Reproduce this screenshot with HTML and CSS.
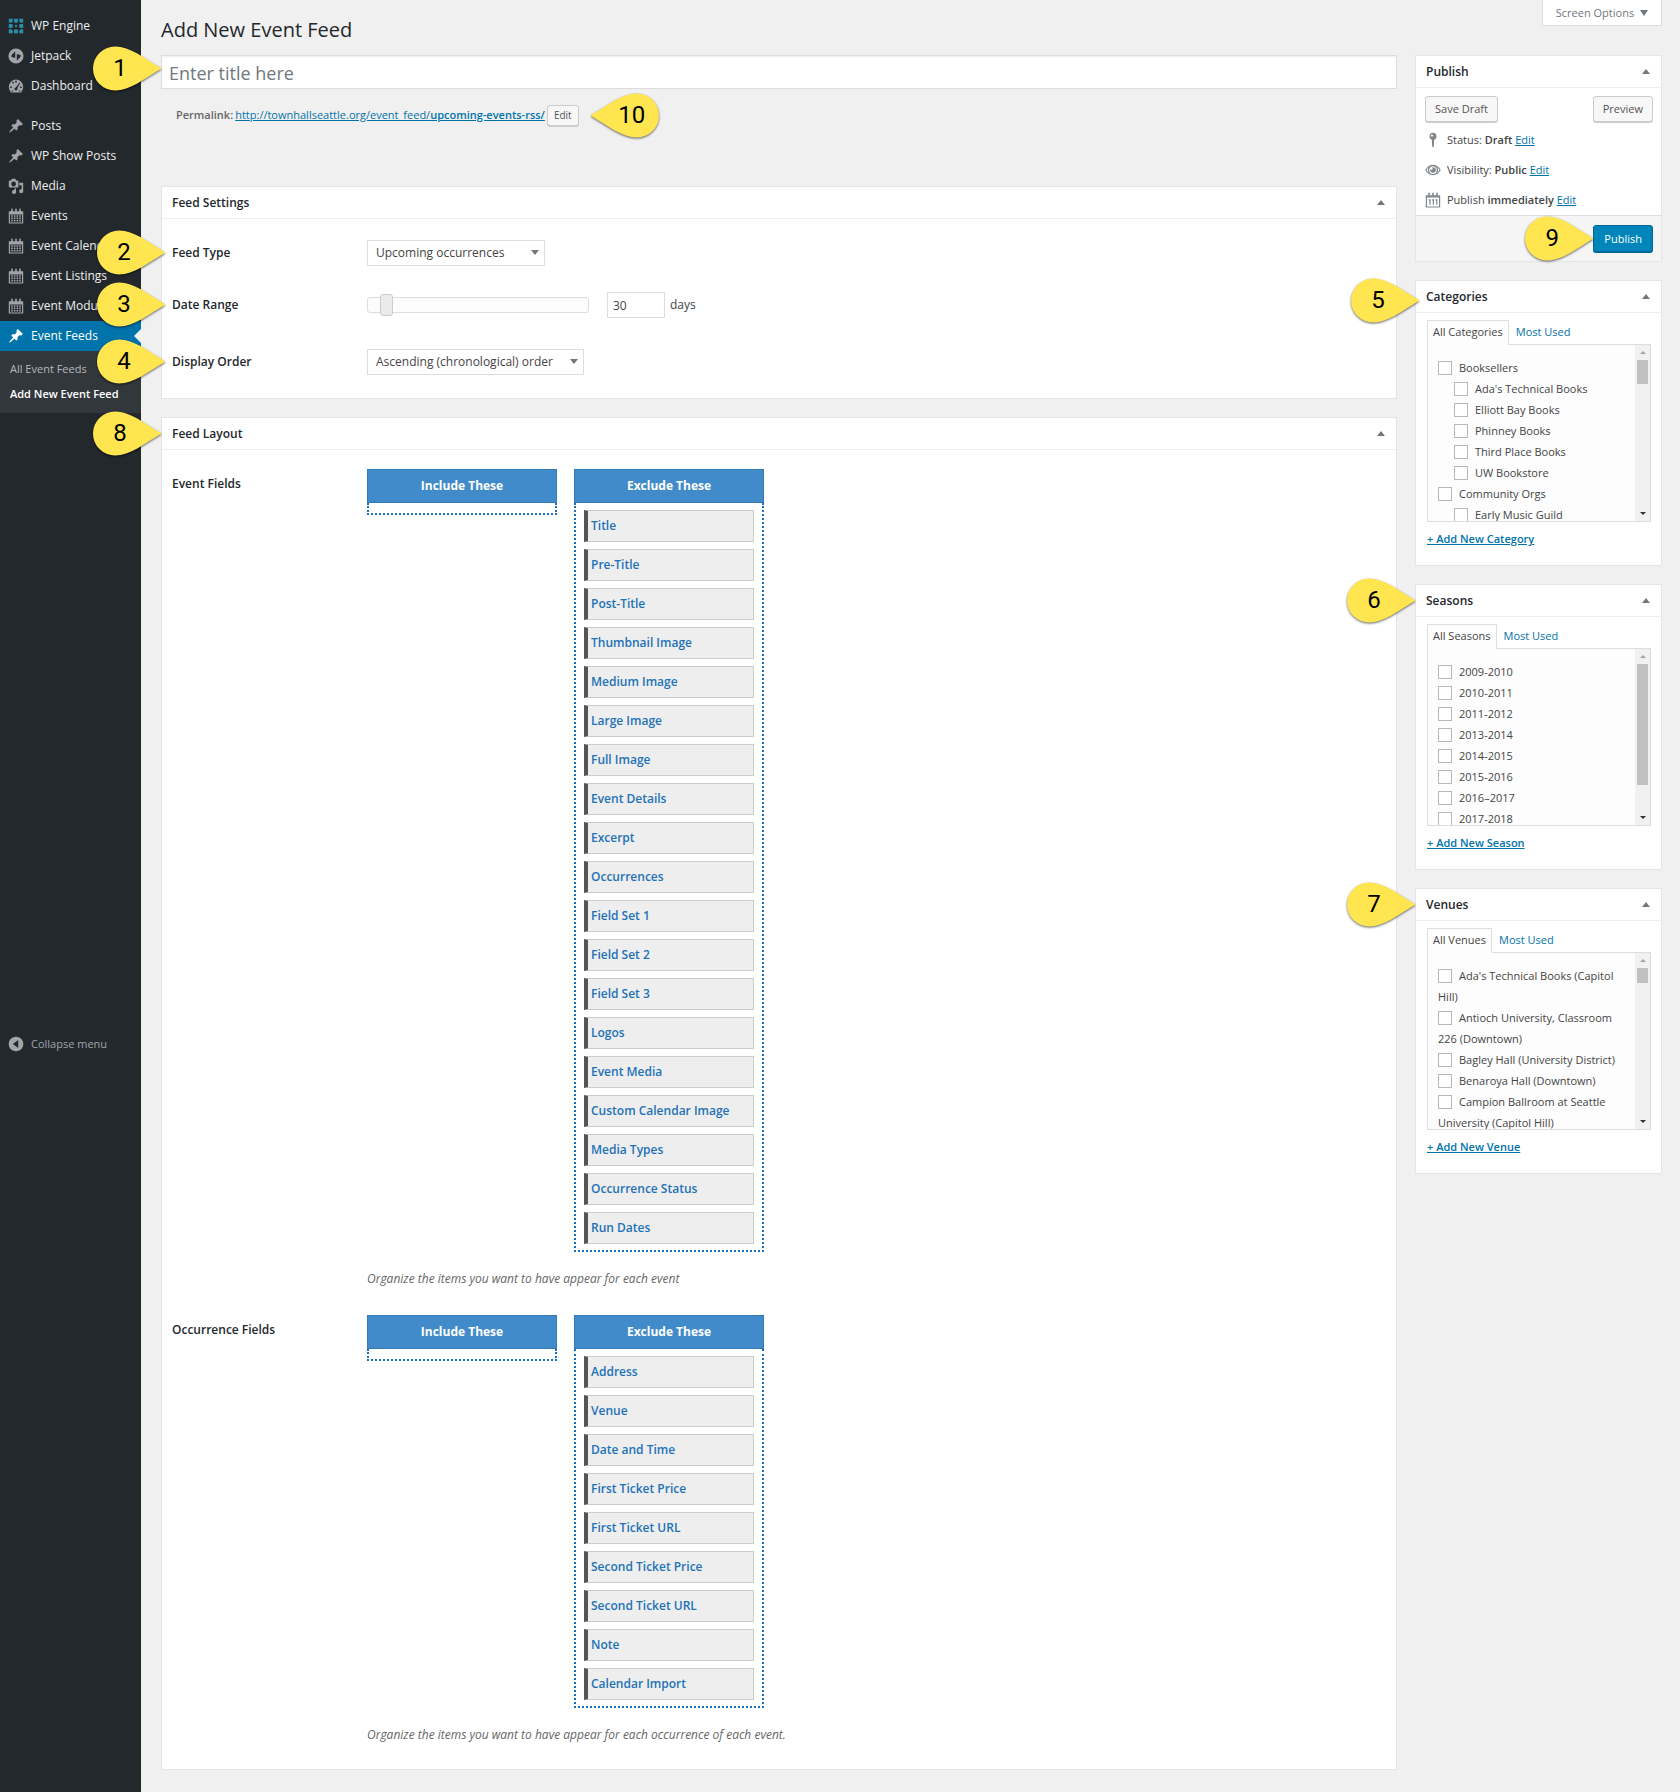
FILE: index.html
```html
<!DOCTYPE html>
<html lang="en">
<head>
<meta charset="utf-8">
<meta name="viewport" content="width=device-width, initial-scale=1">
<title>Add New Event Feed</title>
<link rel="stylesheet" href="styles.css">
</head>
<body>
<svg class="defs" aria-hidden="true">
  <symbol id="i-pin" viewBox="0 0 20 20"><path d="M10.44 3.02l1.82-1.82 6.36 6.35-1.83 1.82c-1.05-.68-2.48-.57-3.41.36l-.75.75c-.92.93-1.04 2.35-.35 3.41l-1.83 1.82-2.41-2.41-2.8 2.79c-.42.42-3.38 2.71-3.8 2.29s1.86-3.39 2.28-3.81l2.79-2.79L4.1 9.36l1.83-1.82c1.05.69 2.48.57 3.4-.36l.75-.75c.93-.92 1.05-2.35.36-3.41z"/></symbol>
  <symbol id="i-cal" viewBox="0 0 20 20"><path fill-rule="evenodd" d="M1 4h3V1.500c0-.8.500-1 1-1s1 .2 1 1V4h3V1.500c0-.8.500-1 1-1s1 .2 1 1V4h3V1.500c0-.8.500-1 1-1s1 .2 1 1V4h3v15.500H1zM2.500 8v10h15V8zM4 9h2v2H4zm3.300 0h2v2h-2zm3.400 0h2v2h-2zM14 9h2v2h-2zM4 12h2v2H4zm3.300 0h2v2h-2zm3.400 0h2v2h-2zM14 12h2v2h-2zM4 15h2v2H4zm3.300 0h2v2h-2zm3.400 0h2v2h-2zM14 15h2v2h-2z"/></symbol>
  <symbol id="i-drop" viewBox="0 0 70 45"><path d="M69.500 22.500C52 12 38 .5 23 .5a22 22 0 0 0 0 44c15 0 29-11.500 46.500-22z"/></symbol>
</svg>
<div class="layout">
  <nav class="sidebar" aria-label="Admin menu">
    <ul class="menu">
      <li><a href="#"><svg class="icon teal" viewBox="0 0 20 20"><path d="M1 1h5v3L4 6H1zM7.500 1h5v3.500l-1 1.500h-3l-1-1.500zM14 1h5v5h-3l-2-2zM1 7.500h3.500l1.500 1v3l-1.500 1H1zM8.800 8.800h2.400v2.400H8.800zM19 7.500h-3.500l-1.500 1v3l1.500 1H19zM1 14h3l2 2v3H1zM7.500 19v-3.500l1-1.500h3l1 1.500V19zM14 16l2-2h3v5h-5z"/></svg>WP Engine</a></li>
      <li><a href="#"><svg class="icon" viewBox="0 0 20 20"><path fill-rule="evenodd" d="M10 .5a9.500 9.500 0 1 0 0 19 9.500 9.500 0 0 0 0-19zM9 4v8.500l-4-1.200c-1-.3-1.200-1-.8-1.800zM11 16V7.500l4 1.200c1 .3 1.200 1 .8 1.800z"/></svg>Jetpack</a></li>
      <li><a href="#"><svg class="icon" viewBox="0 0 20 20"><path fill-rule="evenodd" d="M10 2a9 9 0 0 0-9 9c0 2.700 1 5 2.700 7h12.600C18 16 19 13.700 19 11a9 9 0 0 0-9-9zM9 3.500h2v2H9zM5 5.500l1.500-1 1.200 1.500-1.400 1.300zM2.800 10.500h2v2h-2zM15.200 10.500h2v2h-2zM14.500 5.500l.8.8-3.600 6.400c.5 1.300-.3 2.800-1.700 2.800s-2.400-1.600-1.600-2.800c.3-.6.800-.9 1.400-.9zM4.500 15.500h2V17h-2zM13.500 15.500h2V17h-2z"/></svg>Dashboard</a></li>
      <li class="group"><a href="#"><svg class="icon"><use href="#i-pin"/></svg>Posts</a></li>
      <li><a href="#"><svg class="icon"><use href="#i-pin"/></svg>WP Show Posts</a></li>
      <li><a href="#"><svg class="icon" viewBox="0 0 20 20"><path fill-rule="evenodd" d="M13 11V4c0-.55-.45-1-1-1h-1.670L9 1H5L3.670 3H2c-.55 0-1 .45-1 1v7c0 .55.45 1 1 1h10c.55 0 1-.45 1-1zM7 4.500a3 3 0 1 1 0 6 3 3 0 0 1 0-6zM14 6h5v10.500c0 1.400-1.100 2.500-2.500 2.500a2.500 2.500 0 1 1 .5-4.950V9h-3zM10 13v4.500c0 1.400-1.100 2.500-2.500 2.500a2.500 2.500 0 1 1 .5-4.950V13z"/></svg>Media</a></li>
      <li><a href="#"><svg class="icon"><use href="#i-cal"/></svg>Events</a></li>
      <li><a href="#"><svg class="icon"><use href="#i-cal"/></svg>Event Calendar</a></li>
      <li><a href="#"><svg class="icon"><use href="#i-cal"/></svg>Event Listings</a></li>
      <li><a href="#"><svg class="icon"><use href="#i-cal"/></svg>Event Modules</a></li>
      <li class="current"><a href="#" aria-current="true"><svg class="icon"><use href="#i-pin"/></svg>Event Feeds</a>
        <ul class="submenu">
          <li><a href="#">All Event Feeds</a></li>
          <li><a href="#" class="active">Add New Event Feed</a></li>
        </ul>
      </li>
    </ul>
    <button type="button" class="collapse"><svg class="icon" viewBox="0 0 20 20"><path fill-rule="evenodd" d="M10 .8a9.200 9.200 0 1 0 0 18.400A9.200 9.200 0 0 0 10 .8zM12.800 5v10L6 10z"/></svg>Collapse menu</button>
  </nav>

  <main class="content">
    <header class="top">
      <h1>Add New Event Feed</h1>
      <button type="button" class="screen-options">Screen Options <span class="tri down"></span></button>
    </header>

    <div class="columns">
      <div class="primary">
        <div class="anchor">
          <input class="title-input" type="text" placeholder="Enter title here" aria-label="Enter title here">
          <span class="callout at-edge high"><svg><use href="#i-drop"/></svg><b>1</b></span>
        </div>
        <div class="permalink">
          <strong>Permalink:</strong>
          <a href="#">http://townhallseattle.org/event_feed/<b>upcoming-events-rss/</b></a>
          <span class="anchor"><button type="button" class="button tiny">Edit</button><span class="callout left"><svg><use href="#i-drop"/></svg><b>10</b></span></span>
        </div>

        <section class="panel">
          <header class="panel-head"><h2>Feed Settings</h2><span class="tri up"></span></header>
          <div class="settings">
            <div class="row">
              <label class="anchor" for="type">Feed Type<span class="callout"><svg><use href="#i-drop"/></svg><b>2</b></span></label>
              <span class="select short"><select id="type"><option>Upcoming occurrences</option></select></span>
            </div>
            <div class="row range-row">
              <label class="anchor" for="days">Date Range<span class="callout"><svg><use href="#i-drop"/></svg><b>3</b></span></label>
              <div class="range">
                <input type="range" min="0" max="500" value="30" aria-label="Date range slider">
                <input id="days" class="days" type="text" value="30"><span>days</span>
              </div>
            </div>
            <div class="row">
              <label class="anchor" for="order">Display Order<span class="callout"><svg><use href="#i-drop"/></svg><b>4</b></span></label>
              <span class="select long"><select id="order"><option>Ascending (chronological) order</option></select></span>
            </div>
          </div>
        </section>

        <section class="panel">
          <header class="panel-head"><h2 class="anchor">Feed Layout<span class="callout far"><svg><use href="#i-drop"/></svg><b>8</b></span></h2><span class="tri up"></span></header>
          <div class="fields">
            <h3>Event Fields</h3>
            <div>
              <div class="lists">
                <div class="list"><h4>Include These</h4><ul></ul></div>
                <div class="list"><h4>Exclude These</h4>
                  <ul>
                    <li>Title</li><li>Pre-Title</li><li>Post-Title</li><li>Thumbnail Image</li><li>Medium Image</li><li>Large Image</li><li>Full Image</li><li>Event Details</li><li>Excerpt</li><li>Occurrences</li><li>Field Set 1</li><li>Field Set 2</li><li>Field Set 3</li><li>Logos</li><li>Event Media</li><li>Custom Calendar Image</li><li>Media Types</li><li>Occurrence Status</li><li>Run Dates</li>
                  </ul>
                </div>
              </div>
              <p class="hint">Organize the items you want to have appear for each event</p>
            </div>
            <h3>Occurrence Fields</h3>
            <div>
              <div class="lists">
                <div class="list"><h4>Include These</h4><ul></ul></div>
                <div class="list"><h4>Exclude These</h4>
                  <ul>
                    <li>Address</li><li>Venue</li><li>Date and Time</li><li>First Ticket Price</li><li>First Ticket URL</li><li>Second Ticket Price</li><li>Second Ticket URL</li><li>Note</li><li>Calendar Import</li>
                  </ul>
                </div>
              </div>
              <p class="hint">Organize the items you want to have appear for each occurrence of each event.</p>
            </div>
          </div>
        </section>
      </div>

      <aside class="secondary">
        <section class="panel">
          <header class="panel-head"><h2>Publish</h2><span class="tri up"></span></header>
          <div class="publish">
            <div class="publish-top"><button type="button" class="button">Save Draft</button><button type="button" class="button">Preview</button></div>
            <p><svg class="icon" viewBox="0 0 20 20"><path fill-rule="evenodd" d="M10 1a4.500 4.500 0 0 1 1.500 8.700l-.5 8.300-1 1.500L9 18l-.5-8.300A4.500 4.500 0 0 1 10 1zM8.700 3a1.400 1.400 0 1 0 0 2.800 1.400 1.400 0 0 0 0-2.800z"/></svg><span>Status: <b>Draft</b> <a href="#">Edit</a></span></p>
            <p><svg class="icon" viewBox="0 0 20 20"><path fill-rule="evenodd" d="M10 3.500c4 0 7.600 2.500 9.700 6.500-2.100 4-5.700 6.500-9.700 6.500S2.400 14 .3 10C2.400 6 6 3.500 10 3.500zm0 1.700a5 5 0 0 0-4 7.800 5 5 0 0 0 8 0 5 5 0 0 0-4-7.800zM5 6.200C3.700 7.200 2.700 8.500 2 10c.7 1.500 1.700 2.800 3 3.800a6.200 6.200 0 0 1 0-7.600zm10 0a6.200 6.200 0 0 1 0 7.600c1.300-1 2.300-2.300 3-3.800-.7-1.500-1.700-2.800-3-3.800zM10 6.500a3.500 3.500 0 1 1-3.500 3.500c0-.4.100-.8.200-1.200.3.600.9 1 1.600 1a1.700 1.700 0 0 0 .5-3.100c.4-.1.800-.2 1.200-.2z"/></svg><span>Visibility: <b>Public</b> <a href="#">Edit</a></span></p>
            <p><svg class="icon" viewBox="0 0 20 20"><path fill-rule="evenodd" d="M1 4h3V1.500c0-.8.500-1 1-1s1 .2 1 1V4h3V1.500c0-.8.500-1 1-1s1 .2 1 1V4h3V1.500c0-.8.500-1 1-1s1 .2 1 1V4h3v15.500H1zM2.500 7v11h15V7zM4.500 9H7v7H5.500v-5.500h-1zM8.700 9h2.500v7H9.700v-5.500h-1zM13 9h2.500v7H14v-5.500h-1z"/></svg><span>Publish <b>immediately</b> <a href="#">Edit</a></span></p>
          </div>
          <footer class="publish-foot"><span class="anchor"><button type="button" class="button primary-button">Publish</button><span class="callout at-edge"><svg><use href="#i-drop"/></svg><b>9</b></span></span></footer>
        </section>

        <section class="panel">
          <header class="panel-head"><h2 class="anchor">Categories<span class="callout low"><svg><use href="#i-drop"/></svg><b>5</b></span></h2><span class="tri up"></span></header>
          <div class="tax">
            <div class="tabs"><a href="#" class="tab on">All Categories</a><a href="#" class="tab">Most Used</a></div>
            <div class="scroller">
              <ul>
                <li><label><input type="checkbox">Booksellers</label>
                  <ul>
                    <li><label><input type="checkbox">Ada's Technical Books</label></li>
                    <li><label><input type="checkbox">Elliott Bay Books</label></li>
                    <li><label><input type="checkbox">Phinney Books</label></li>
                    <li><label><input type="checkbox">Third Place Books</label></li>
                    <li><label><input type="checkbox">UW Bookstore</label></li>
                  </ul></li>
                <li><label><input type="checkbox">Community Orgs</label>
                  <ul><li><label><input type="checkbox">Early Music Guild</label></li></ul></li>
              </ul>
              <div class="bar"><span class="arrow-up"></span><span class="thumb medium"></span><span class="arrow-down"></span></div>
            </div>
            <a href="#" class="add">+ Add New Category</a>
          </div>
        </section>

        <section class="panel">
          <header class="panel-head"><h2 class="anchor">Seasons<span class="callout far"><svg><use href="#i-drop"/></svg><b>6</b></span></h2><span class="tri up"></span></header>
          <div class="tax">
            <div class="tabs"><a href="#" class="tab on">All Seasons</a><a href="#" class="tab">Most Used</a></div>
            <div class="scroller">
              <ul>
                <li><label><input type="checkbox">2009-2010</label></li>
                <li><label><input type="checkbox">2010-2011</label></li>
                <li><label><input type="checkbox">2011-2012</label></li>
                <li><label><input type="checkbox">2013-2014</label></li>
                <li><label><input type="checkbox">2014-2015</label></li>
                <li><label><input type="checkbox">2015-2016</label></li>
                <li><label><input type="checkbox">2016–2017</label></li>
                <li><label><input type="checkbox">2017-2018</label></li>
              </ul>
              <div class="bar"><span class="arrow-up"></span><span class="thumb large"></span><span class="arrow-down"></span></div>
            </div>
            <a href="#" class="add">+ Add New Season</a>
          </div>
        </section>

        <section class="panel">
          <header class="panel-head"><h2 class="anchor">Venues<span class="callout far"><svg><use href="#i-drop"/></svg><b>7</b></span></h2><span class="tri up"></span></header>
          <div class="tax">
            <div class="tabs"><a href="#" class="tab on">All Venues</a><a href="#" class="tab">Most Used</a></div>
            <div class="scroller">
              <ul>
                <li><label><input type="checkbox">Ada's Technical Books (Capitol Hill)</label></li>
                <li><label><input type="checkbox">Antioch University, Classroom 226 (Downtown)</label></li>
                <li><label><input type="checkbox">Bagley Hall (University District)</label></li>
                <li><label><input type="checkbox">Benaroya Hall (Downtown)</label></li>
                <li><label><input type="checkbox">Campion Ballroom at Seattle University (Capitol Hill)</label></li>
              </ul>
              <div class="bar"><span class="arrow-up"></span><span class="thumb small"></span><span class="arrow-down"></span></div>
            </div>
            <a href="#" class="add">+ Add New Venue</a>
          </div>
        </section>
      </aside>
    </div>
  </main>
</div>
</body>
</html>
```
FILE: styles.css
```css
* { box-sizing: border-box; }
body {
  margin: 0;
  background: #f0f0f0;
  color: #444;
  font: 11px/20px "Open Sans", "Noto Sans", sans-serif;
}
h1, h2, h3, h4, p, ul { margin: 0; padding: 0; }
ul { list-style: none; }
a { color: #0073aa; }
button, input, select { font: inherit; color: inherit; margin: 0; }
b, strong { font-weight: 600; }
.defs { display: none; }
.icon { width: 16px; height: 16px; flex: none; fill: currentColor; }
.anchor { position: relative; }

.layout { display: flex; min-height: 100vh; }

/* Admin menu */
.sidebar {
  width: 141px;
  flex: none;
  padding-top: 11px;
  background: #23282d;
  font-size: 12px;
}
.menu > li > a, .collapse {
  display: flex;
  align-items: center;
  gap: 7px;
  height: 30px;
  padding: 0 8px;
  color: #eee;
  text-decoration: none;
  white-space: nowrap;
}
.menu .icon { color: #a0a5aa; }
.menu .teal { color: #2b8fa6; }
.menu .group { margin-top: 10px; }
.menu .current > a { position: relative; background: #0073aa; color: #fff; }
.menu .current .icon { color: #fff; }
.current > a::after {
  content: "";
  position: absolute;
  right: 0;
  top: 8px;
  border: 7px solid transparent;
  border-left: 0;
  border-right-color: #f0f0f0;
}
.submenu { padding: 5px 0 7px; background: #32373c; font-size: 11px; }
.submenu a {
  display: block;
  padding: 0 10px;
  line-height: 25px;
  color: #b4b9be;
  text-decoration: none;
  white-space: nowrap;
}
.submenu .active { color: #fff; font-weight: 600; }
.collapse {
  margin-top: 616px;
  border: 0;
  background: none;
  color: #a0a5aa;
  font-size: 11px;
}

/* Page frame */
.content { flex: 1; min-width: 0; padding: 0 18px 25px 20px; }
.top { display: flex; justify-content: space-between; align-items: flex-start; height: 55px; }
h1 { padding-top: 17px; font-size: 20px; line-height: 26px; font-weight: 400; color: #23282d; }
.screen-options {
  height: 26px;
  padding: 0 13px;
  border: 1px solid #ddd;
  border-top: 0;
  background: #fff;
  color: #72777c;
}
.tri { display: inline-block; border: 4px solid transparent; border-top-width: 0; border-bottom: 5px solid #72777c; }
.tri.down { margin: 0 0 1px 3px; border-top: 6px solid #72777c; border-bottom-width: 0; }
.columns { display: flex; gap: 18px; align-items: flex-start; }
.primary { flex: 1; min-width: 0; }
.secondary { width: 247px; flex: none; }

/* Title and permalink */
.title-input {
  display: block;
  width: 100%;
  height: 34px;
  padding: 2px 7px 0;
  border: 1px solid #ddd;
  background: #fff;
  font-size: 18px;
  box-shadow: inset 0 1px 2px rgba(0, 0, 0, .07);
}
.title-input::placeholder { color: #72777c; opacity: 1; }
.permalink {
  display: flex;
  align-items: center;
  gap: 2px;
  height: 22px;
  margin: 15px 0 60px;
  padding-left: 15px;
  color: #666;
}
.button {
  height: 26px;
  padding: 0 9px;
  border: 1px solid #ccc;
  border-radius: 3px;
  background: #f7f7f7;
  box-shadow: 0 1px 0 #ccc;
  color: #555;
}
.tiny { display: block; height: 21px; padding: 0 6px; font-size: 10px; line-height: 18px; }
.primary-button { display: block; height: 27px; padding: 0 10px; border-color: #006799; background: #0085ba; box-shadow: 0 1px 0 #006799; color: #fff; }

/* Panels */
.panel { margin-bottom: 18px; border: 1px solid #e5e5e5; background: #fff; }
.primary .panel:last-child, .secondary .panel:last-child { margin-bottom: 0; }
.panel-head {
  display: flex;
  justify-content: space-between;
  align-items: center;
  height: 32px;
  padding: 0 11px 0 10px;
  border-bottom: 1px solid #eee;
}
h2, h3, .row label { font-size: 12px; font-weight: 600; color: #23282d; }

/* Feed settings */
.settings { padding: 21px 10px 23px; }
.row { display: grid; grid-template-columns: 195px 1fr; align-items: center; min-height: 26px; }
.row + .row { margin-top: 26px; }
.row.range-row { margin-bottom: 31px; }
.row label { justify-self: start; }
.select { position: relative; display: block; }
.short { width: 178px; }
.long { width: 217px; }
.select::after {
  content: "";
  position: absolute;
  right: 6px;
  top: 10px;
  border: 4px solid transparent;
  border-top: 5px solid #72777c;
  border-bottom: 0;
}
select {
  display: block;
  appearance: none;
  width: 100%;
  height: 26px;
  padding: 0 8px;
  border: 1px solid #ddd;
  border-radius: 0;
  background: #fff;
  font-size: 12px;
}
.range { display: flex; align-items: center; font-size: 12px; }
.range input[type="range"] {
  appearance: none;
  width: 222px;
  height: 16px;
  margin-right: 18px;
  border: 1px solid #ddd;
  border-radius: 3px;
  background: #fcfcfc;
}
.range input::-webkit-slider-thumb {
  appearance: none;
  width: 13px;
  height: 22px;
  border: 1px solid #ccc;
  border-radius: 3px;
  background: #ebebeb;
}
.days { width: 58px; height: 26px; margin-right: 5px; padding: 0 5px; border: 1px solid #ddd; background: #fff; }

/* Field lists */
.fields { display: grid; grid-template-columns: 195px 1fr; padding: 19px 10px 24px; }
h3 { padding-top: 5px; }
.lists { display: flex; gap: 17px; align-items: flex-start; }
.list { width: 190px; text-align: center; }
.list h4 { background: #428bca; border: 1px solid #337ab7; color: #fff; font-size: 12px; line-height: 32px; font-weight: 700; }
.list ul {
  display: grid;
  gap: 7px;
  padding: 7px 8px 6px;
  border: 2px dotted #1b6fc0;
  border-top: 0;
}
.list ul:empty { padding: 5px; }
.list li {
  padding-left: 3px;
  border: 1px solid #ccc;
  border-left: 4px solid #555;
  background: #eee;
  color: #2272b8;
  font-size: 12px;
  line-height: 30px;
  font-weight: 600;
  text-align: left;
}
.hint { margin: 17px 0 26px; color: #666; font-size: 12px; font-style: italic; }
.fields > :last-child .hint { margin-bottom: 0; }

/* Publish box */
.publish { padding: 8px 8px 0 9px; }
.publish-top { display: flex; justify-content: space-between; margin-bottom: 3px; }
.publish p { display: flex; align-items: center; gap: 6px; height: 30px; }
.publish .icon { color: #82878c; }
.publish-foot { display: flex; justify-content: flex-end; padding: 9px 8px; border-top: 1px solid #ddd; background: #f5f5f5; }

/* Taxonomy boxes */
.tax { padding: 7px 10px 16px 11px; }
.tabs { display: flex; gap: 1px; }
.tab { height: 24px; padding: 0 5px; border: 1px solid transparent; line-height: 22px; text-decoration: none; }
.on { position: relative; margin-bottom: -1px; height: 25px; border-color: #ddd; border-bottom-color: #fdfdfd; background: #fdfdfd; color: #444; }
.scroller { display: flex; height: 178px; overflow: hidden; border: 1px solid #ddd; background: #fdfdfd; }
.scroller > ul { flex: 1; padding: 12px 10px 0; line-height: 21px; }
.scroller ul ul { padding-left: 16px; }
.scroller input {
  appearance: none;
  width: 14px;
  height: 14px;
  margin: 0 7px 0 0;
  border: 1px solid #b4b9be;
  background: #fff;
  vertical-align: -3px;
}
.bar { display: flex; flex-direction: column; align-items: center; width: 15px; padding: 6px 0; background: #f1f1f1; }
.arrow-up { border: 3px solid transparent; border-top: 0; border-bottom-color: #a3a3a3; }
.arrow-down { margin-top: auto; border: 3px solid transparent; border-bottom: 0; border-top-color: #333; }
.thumb { width: 11px; margin-top: 6px; background: #c1c1c1; }
.thumb.small { height: 15px; }
.thumb.medium { height: 24px; }
.thumb.large { height: 121px; }
.add { display: inline-block; margin-top: 7px; font-weight: 600; }

/* Numbered markers laid over the screen */
.callout {
  position: absolute;
  z-index: 2;
  right: 100%;
  top: 50%;
  width: 70px;
  height: 46px;
  margin: -23px 6px 0 0;
}
.callout svg { display: block; width: 70px; height: 45px; fill: #ffe650; filter: drop-shadow(0 1px 1px rgba(0, 0, 0, .6)); }
.callout b {
  position: absolute;
  inset: 0 14px 0 0;
  color: #000;
  font: 400 24px/45px Roboto, sans-serif;
  text-align: center;
}
.callout.at-edge { margin-right: -1px; }
.callout.far { margin-right: 10px; }
.callout.low { margin-top: -19px; }
.callout.high { margin-top: -26px; }
.callout.left { right: auto; left: 100%; margin: -22px 0 0 11px; }
.callout.left svg { transform: scaleX(-1); }
.callout.left b { inset: 0 0 0 14px; }
```
